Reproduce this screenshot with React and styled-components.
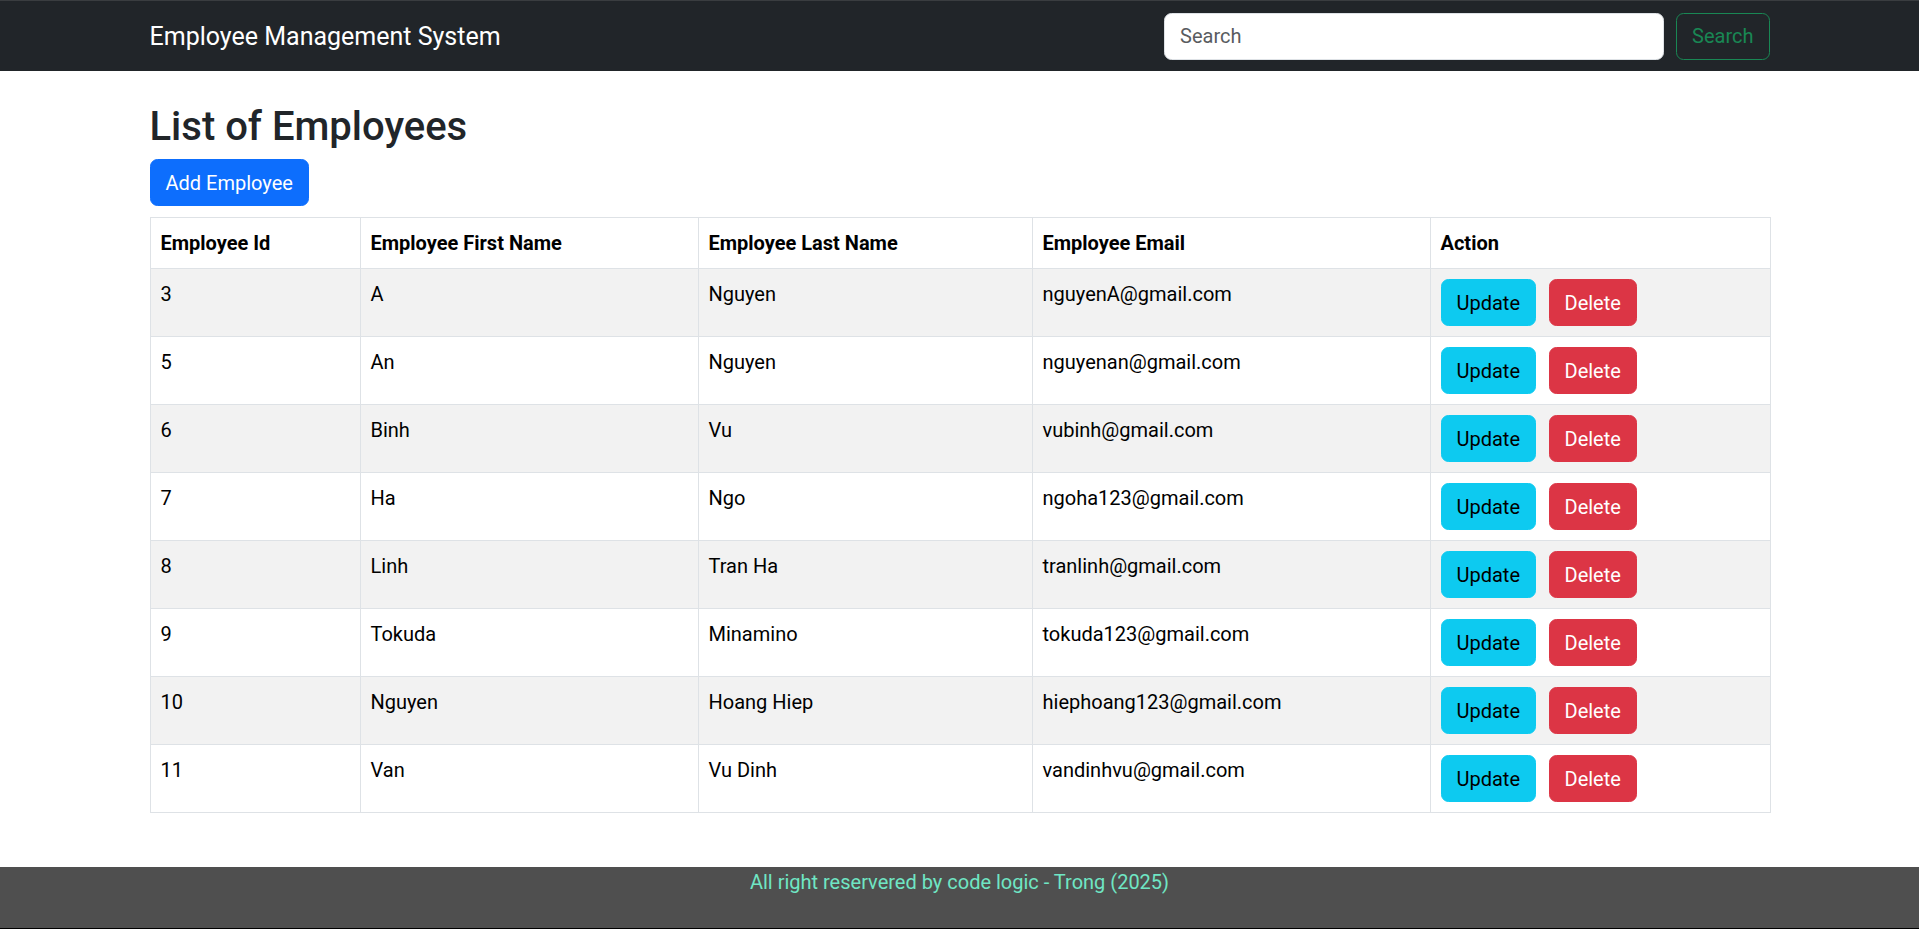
import React from 'react'
import styled, { createGlobalStyle } from 'styled-components'

const GlobalStyle = createGlobalStyle`
    * {
        box-sizing: border-box;
    }
    body {
        margin: 0;
        font-family: "Segoe UI", Roboto, "Noto Sans", sans-serif;
        font-size: 20px;
        line-height: 1.5;
        color: #212529;
        background: #fff;
    }
`;

const employees = [
    { id: 3, firstName: 'A', lastName: 'Nguyen', email: 'nguyenA@gmail.com' },
    { id: 5, firstName: 'An', lastName: 'Nguyen', email: 'nguyenan@gmail.com' },
    { id: 6, firstName: 'Binh', lastName: 'Vu', email: 'vubinh@gmail.com' },
    { id: 7, firstName: 'Ha', lastName: 'Ngo', email: 'ngoha123@gmail.com' },
    { id: 8, firstName: 'Linh', lastName: 'Tran Ha', email: 'tranlinh@gmail.com' },
    { id: 9, firstName: 'Tokuda', lastName: 'Minamino', email: 'tokuda123@gmail.com' },
    { id: 10, firstName: 'Nguyen', lastName: 'Hoang Hiep', email: 'hiephoang123@gmail.com' },
    { id: 11, firstName: 'Van', lastName: 'Vu Dinh', email: 'vandinhvu@gmail.com' },
]

const columns = [
    { title: 'Employee Id', width: 210 },
    { title: 'Employee First Name', width: 338 },
    { title: 'Employee Last Name', width: 334 },
    { title: 'Employee Email', width: 398 },
    { title: 'Action', width: 340 },
]

function Header() {
    return (
        <NavBar>
            <Container>
                <NavInner>
                    <Brand>Employee Management System</Brand>
                    <SearchForm onSubmit={(e) => e.preventDefault()}>
                        <SearchInput type="search" placeholder="Search" />
                        <OutlineButton type="submit">Search</OutlineButton>
                    </SearchForm>
                </NavInner>
            </Container>
        </NavBar>
    )
}

function EmployeeList() {
    return (
        <Container>
            <Heading>List of Employees</Heading>
            <Button variant="primary">Add Employee</Button>
            <Table>
                <colgroup>
                    {columns.map((c) => <col key={c.title} style={{ width: c.width }} />)}
                </colgroup>
                <thead>
                    <tr>
                        {columns.map((c) => <th key={c.title}>{c.title}</th>)}
                    </tr>
                </thead>
                <tbody>
                    {employees.map((x) => (
                        <tr key={x.id}>
                            <td>{x.id}</td>
                            <td>{x.firstName}</td>
                            <td>{x.lastName}</td>
                            <td>{x.email}</td>
                            <td>
                                <Button variant="info">Update</Button>
                                <Button variant="danger" spaced>Delete</Button>
                            </td>
                        </tr>
                    ))}
                </tbody>
            </Table>
        </Container>
    )
}

export default function App() {
    return (
        <Page>
            <GlobalStyle />
            <Header />
            <Main>
                <EmployeeList />
            </Main>
            <Footer>
                <FooterText>All right reservered by code logic - Trong (2025)</FooterText>
            </Footer>
        </Page>
    )
}

const variants = {
    primary: { bg: '#0d6efd', color: '#fff' },
    info: { bg: '#0dcaf0', color: '#000' },
    danger: { bg: '#dc3545', color: '#fff' },
}

const Page = styled.div`
    min-height: 100vh;
    display: flex;
    flex-direction: column;
`;

const Container = styled.div`
    width: 100%;
    max-width: 1650px;
    margin: 0 auto;
    padding: 0 15px;
`;

const NavBar = styled.nav`
    background: #212529;
    border-top: 1px solid #3a3d40;
    padding: 11.5px 0 11px;
`;

const NavInner = styled.div`
    display: flex;
    align-items: center;
    justify-content: space-between;
`;

const Brand = styled.a`
    color: #fff;
    font-size: 25px;
    line-height: 1.5;
    text-decoration: none;
`;

const SearchForm = styled.form`
    display: flex;
    align-items: center;
`;

const SearchInput = styled.input`
    width: 500px;
    height: 47.5px;
    margin-right: 12px;
    padding: 7.5px 15px;
    font: inherit;
    font-size: 20px;
    color: #212529;
    background: #fff;
    border: 1px solid #dee2e6;
    border-radius: 7.5px;
    outline: none;

    &::placeholder {
        color: #595c5f;
    }
`;

const OutlineButton = styled.button`
    height: 47.5px;
    padding: 7.5px 15px;
    font: inherit;
    font-size: 20px;
    color: #198754;
    background: transparent;
    border: 1px solid #198754;
    border-radius: 7.5px;
`;

const Main = styled.main`
    flex: 1;
    padding-top: 32px;
    padding-bottom: 50px;
`;

const Heading = styled.h2`
    margin: 0 0 8px;
    font-size: 40px;
    font-weight: 500;
    line-height: 48px;
    color: #212529;
`;

const Button = styled.button`
    display: inline-block;
    height: 47px;
    padding: 7px 15px;
    margin-left: ${(p) => (p.spaced ? '12.5px' : '0')};
    font: inherit;
    font-size: 20px;
    line-height: 1.5;
    color: ${(p) => variants[p.variant].color};
    background: ${(p) => variants[p.variant].bg};
    border: 1px solid ${(p) => variants[p.variant].bg};
    border-radius: 7.5px;
    vertical-align: middle;
    cursor: pointer;
`;

const Table = styled.table`
    width: 100%;
    margin-top: 11px;
    table-layout: fixed;
    border-collapse: collapse;
    color: #000;

    th, td {
        padding: 10px;
        border: 1px solid #dee2e6;
        text-align: left;
        vertical-align: top;
        font-size: 20px;
        line-height: 30px;
    }

    th {
        font-weight: 700;
        vertical-align: bottom;
    }

    td:last-child {
        line-height: 0;
    }

    tbody tr:nth-child(odd) td {
        background: #f2f2f2;
    }
`;

const Footer = styled.footer`
    height: 62px;
    background: #4f4f4f;
    border-bottom: 1px solid #000;
    text-align: center;
`;

const FooterText = styled.span`
    color: #6fe6c4;
    font-size: 20px;
    line-height: 30px;
`;
